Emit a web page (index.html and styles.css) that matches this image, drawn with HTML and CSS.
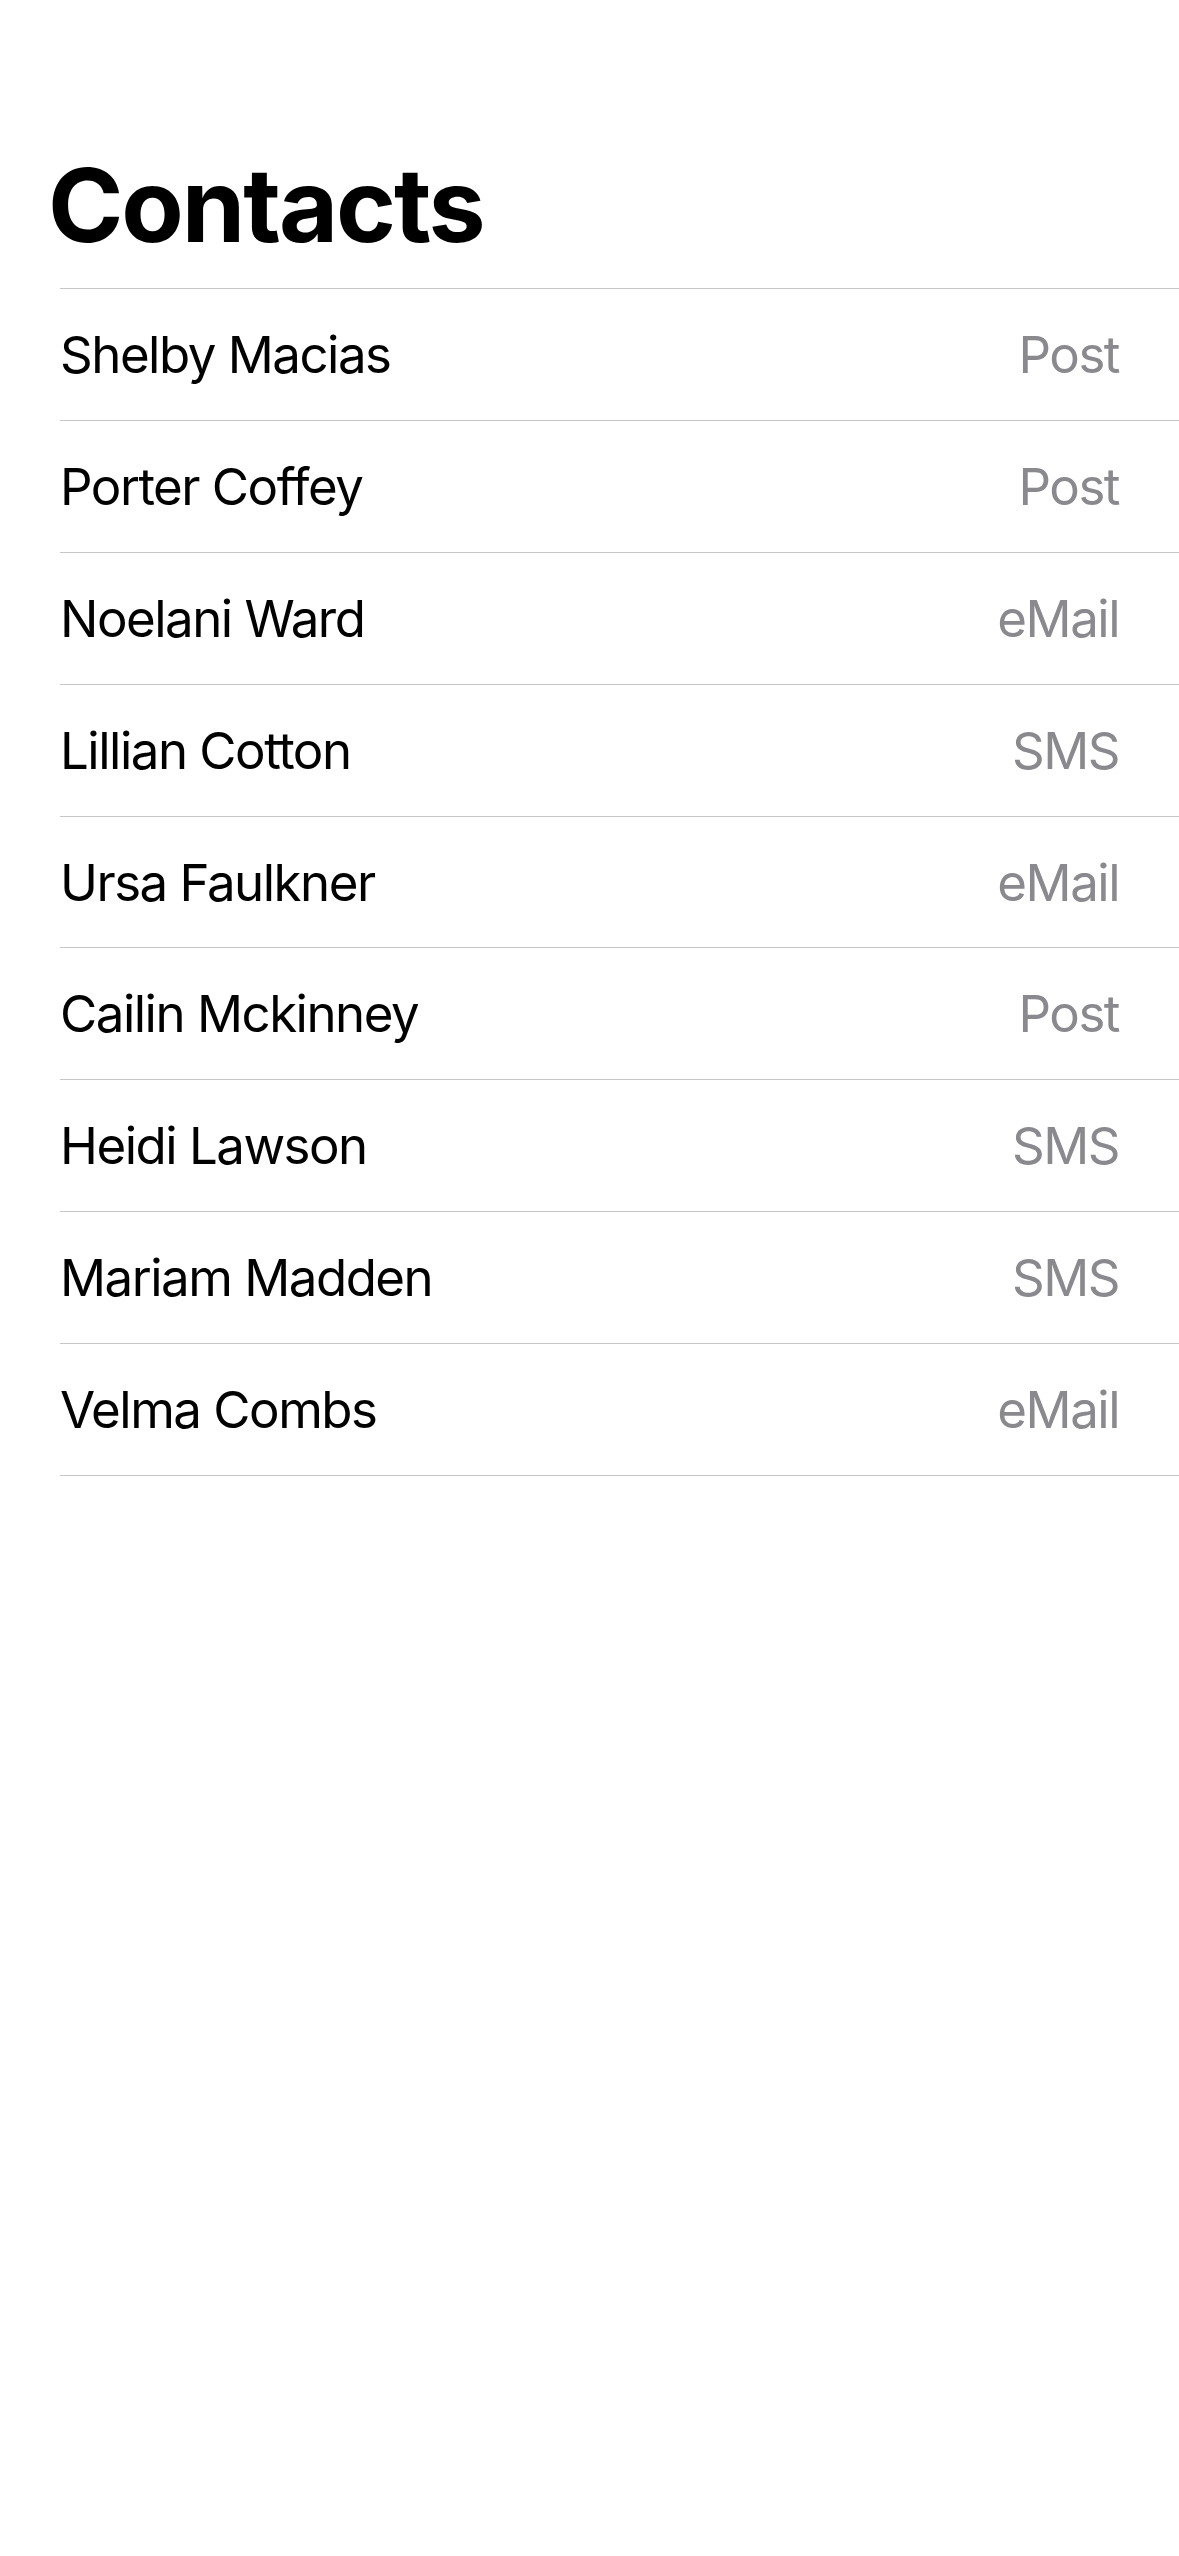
FILE: index.html
```html
<!DOCTYPE html>
<html lang="en">
<head>
<meta charset="utf-8">
<title>Contacts</title>
<link rel="stylesheet" href="styles.css">
</head>
<body>
<main class="screen">
  <header class="header">
    <h1 class="title">Contacts</h1>
  </header>
  <ul class="list">
    <li class="row"><span class="name">Shelby Macias</span><span class="detail">Post</span></li>
    <li class="row"><span class="name">Porter Coffey</span><span class="detail">Post</span></li>
    <li class="row"><span class="name">Noelani Ward</span><span class="detail">eMail</span></li>
    <li class="row"><span class="name">Lillian Cotton</span><span class="detail">SMS</span></li>
    <li class="row"><span class="name">Ursa Faulkner</span><span class="detail">eMail</span></li>
    <li class="row"><span class="name">Cailin Mckinney</span><span class="detail">Post</span></li>
    <li class="row"><span class="name">Heidi Lawson</span><span class="detail">SMS</span></li>
    <li class="row"><span class="name">Mariam Madden</span><span class="detail">SMS</span></li>
    <li class="row"><span class="name">Velma Combs</span><span class="detail">eMail</span></li>
  </ul>
</main>
</body>
</html>
```

FILE: styles.css
```css
* {
  box-sizing: border-box;
}

html, body {
  margin: 0;
  padding: 0;
  background: #ffffff;
}

body {
  font-family: Inter, "Noto Sans", "Liberation Sans", sans-serif;
  color: #000000;
  width: 1179px;
  min-height: 2556px;
}

.screen {
  display: flex;
  flex-direction: column;
}

.header {
  padding: 144px 0 22px 48px;
}

.title {
  margin: 0;
  font-size: 102px;
  line-height: 122px;
  font-weight: 700;
  letter-spacing: -2.1px;
}

.list {
  list-style: none;
  margin: 0 0 0 60px;
  padding: 0;
  border-top: 1px solid #c6c6c8;
}

.row {
  display: flex;
  align-items: center;
  justify-content: space-between;
  height: 131.9px;
  padding-right: 60px;
  border-bottom: 1px solid #c6c6c8;
  font-size: 51px;
  letter-spacing: -1.5px;
}

.name {
  color: #000000;
}

.detail {
  color: #8a8a8e;
}
```
